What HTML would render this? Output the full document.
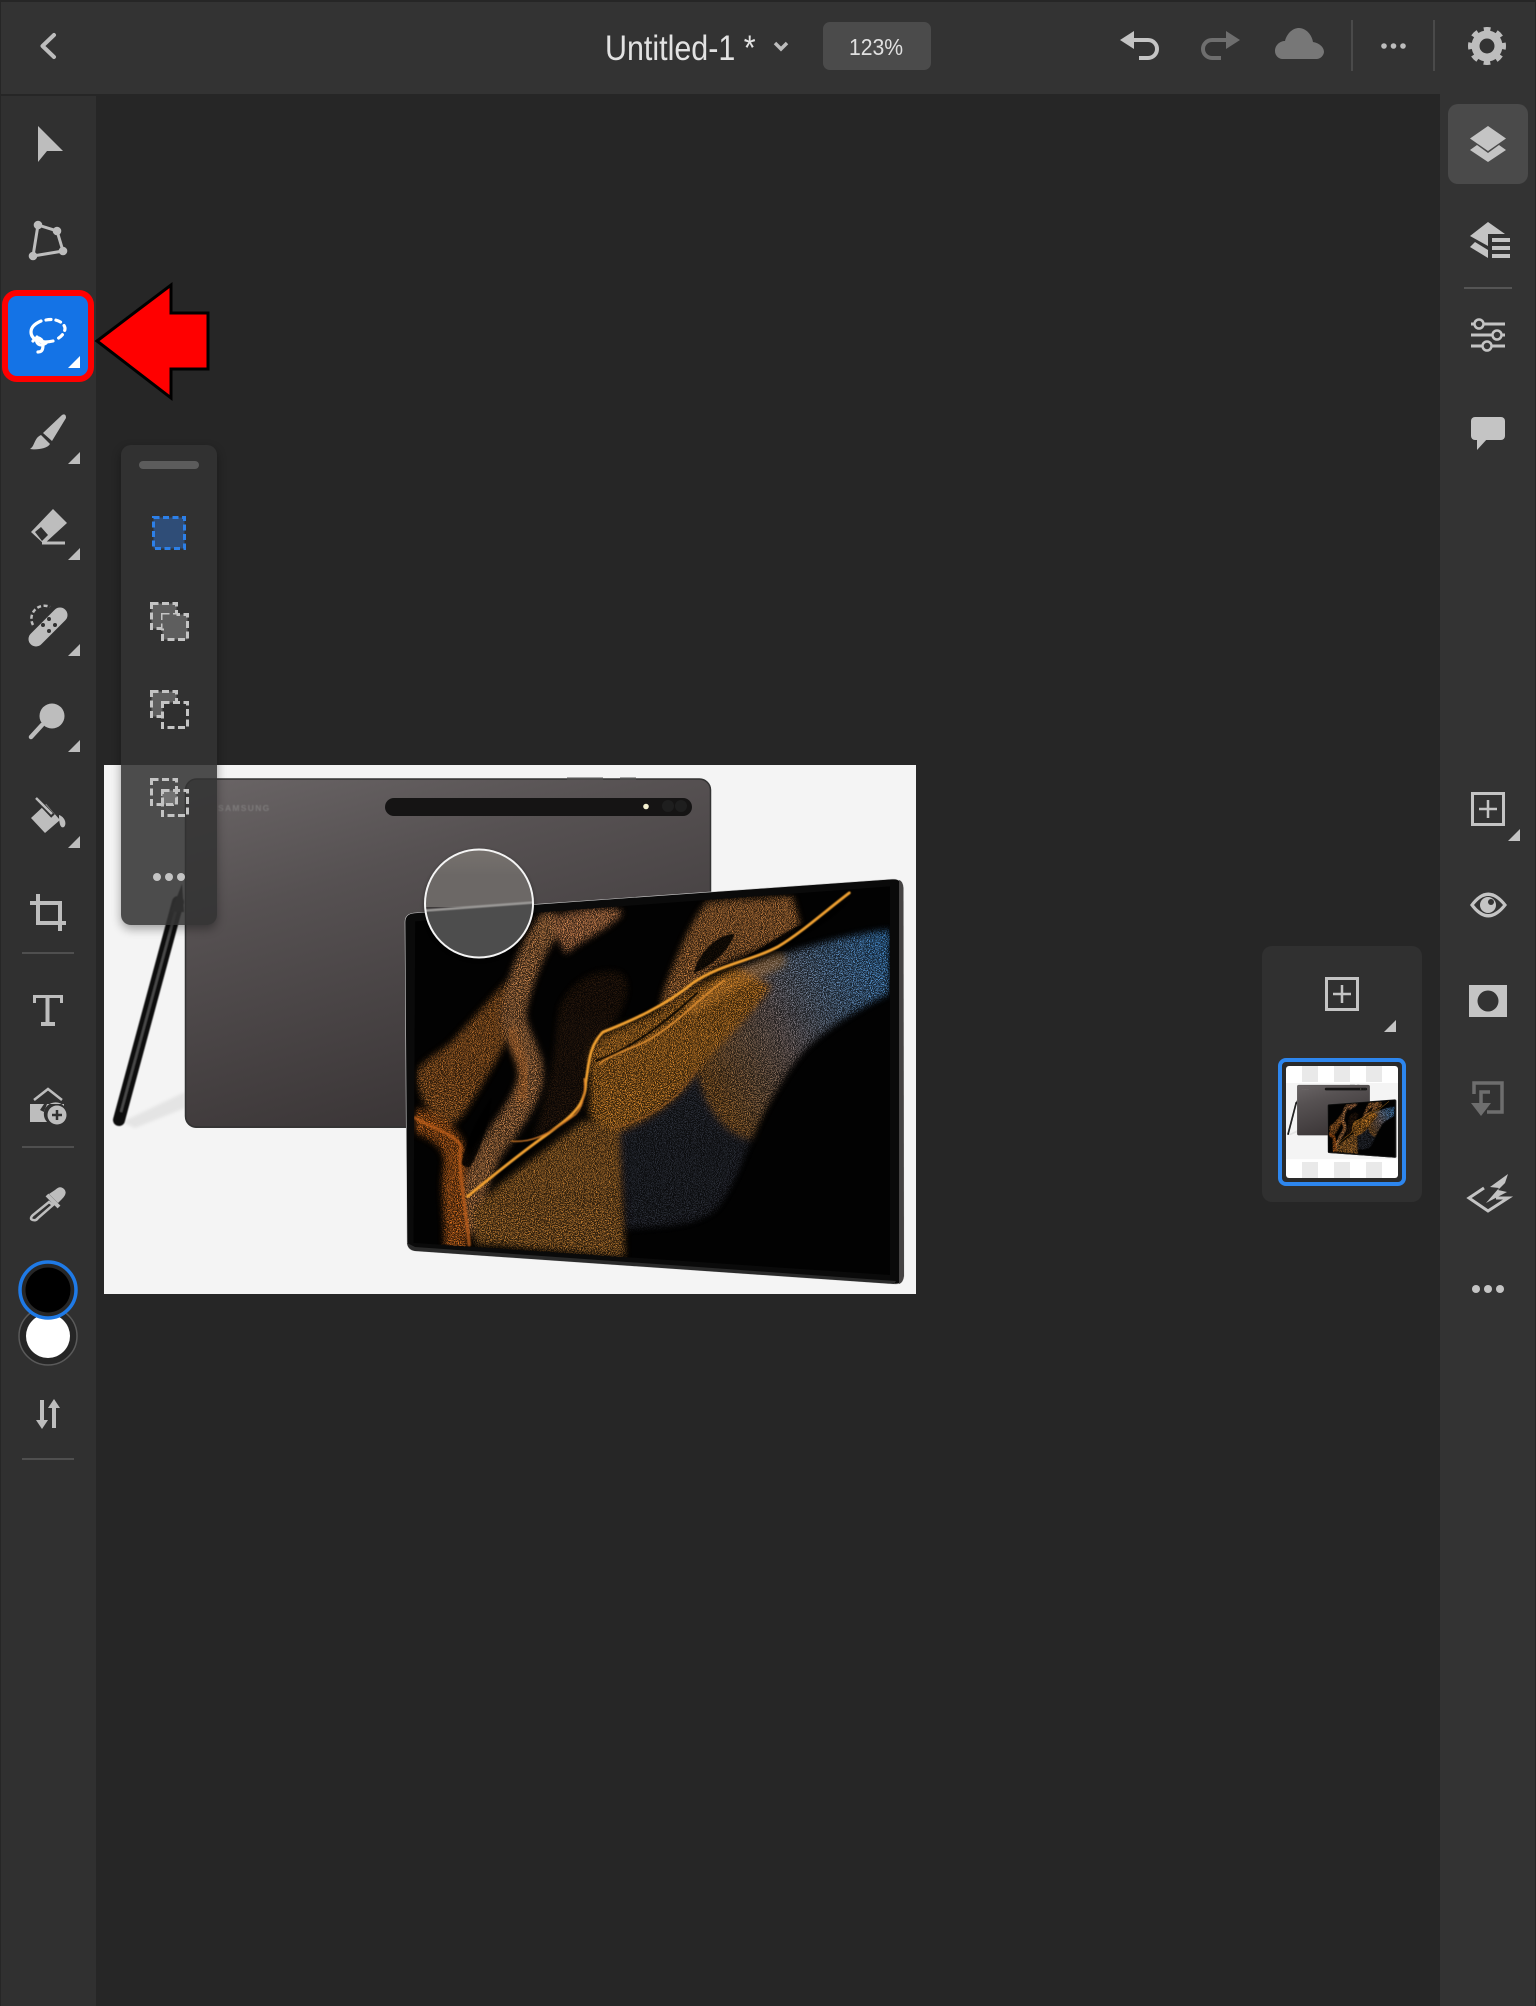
<!DOCTYPE html>
<html><head><meta charset="utf-8"><title>Untitled-1</title>
<style>html,body{margin:0;padding:0;background:#000;width:1536px;height:2006px;overflow:hidden}svg{display:block}text{font-family:"Liberation Sans",sans-serif}</style></head>
<body>
<svg xmlns="http://www.w3.org/2000/svg" width="1536" height="2006" viewBox="0 0 1536 2006">
<defs>
<filter id="st" x="0" y="0" width="1" height="1" color-interpolation-filters="sRGB">
<feTurbulence type="fractalNoise" baseFrequency=".36" numOctaves="3" seed="4" result="n"/>
<feColorMatrix in="n" type="matrix" values="0 0 0 0 0 0 0 0 0 0 0 0 0 0 0 8 0 0 0 -3.950" result="m"/>
<feGaussianBlur in="SourceGraphic" stdDeviation="9" result="s"/>
<feComposite in="s" in2="m" operator="in"/>
<feGaussianBlur stdDeviation="1"/>
</filter>
<filter id="bs" x="-10%" y="-10%" width="120%" height="120%"><feGaussianBlur stdDeviation="12"/></filter>
<filter id="bg" x="-20%" y="-20%" width="140%" height="140%"><feGaussianBlur stdDeviation="10"/></filter>
<filter id="b1" x="-10%" y="-10%" width="120%" height="120%"><feGaussianBlur stdDeviation="1.600"/></filter>
<filter id="bp" x="-20%" y="-5%" width="140%" height="110%"><feGaussianBlur stdDeviation=".6"/></filter>
<filter id="b3" x="-30%" y="-30%" width="160%" height="160%"><feGaussianBlur stdDeviation="5"/></filter>
<filter id="bt"><feGaussianBlur stdDeviation=".55"/></filter>
<linearGradient id="back" x1="0" y1="0" x2=".45" y2="1"><stop offset="0" stop-color="#6a6566"/><stop offset=".35" stop-color="#565152"/><stop offset="1" stop-color="#3a3536"/></linearGradient>
<linearGradient id="blue" gradientUnits="userSpaceOnUse" x1="900" y1="900" x2="1450" y2="570"><stop offset="0" stop-color="#a06a30"/><stop offset=".4" stop-color="#8a7a78"/><stop offset=".75" stop-color="#5f8ab8"/><stop offset="1" stop-color="#4a96de"/></linearGradient>
<linearGradient id="mag" x1="0" y1="0" x2="0" y2="1"><stop offset="0" stop-color="#78736f"/><stop offset=".5" stop-color="#6c6866"/></linearGradient>
<clipPath id="imgclip"><rect x="104" y="765" width="812" height="529"/></clipPath>
<clipPath id="magclip"><circle cx="479" cy="903.5" r="54"/></clipPath>
<clipPath id="noPop"><path clip-rule="evenodd" d="M0 0H1536V2006H0ZM131 445H207A10 10 0 0 1 217 455V915A10 10 0 0 1 207 925H131A10 10 0 0 1 121 915V455A10 10 0 0 1 131 445Z"/></clipPath>
<clipPath id="thumbclip"><rect x="1286" y="1066" width="112" height="112" rx="3"/></clipPath>
<clipPath id="scr"><path d="M45 480L1450 382L1450 1470L40 1380Z"/></clipPath>
<g id="art" stroke-linecap="round" stroke-linejoin="round">
<path fill="#b86e2c" d="M50 900C90 850 130 850 180 790C240 730 300 660 350 620C330 700 320 760 310 820C280 880 240 940 200 1000C170 1050 130 1060 110 1040C80 1000 50 960 50 900Z"/>
<path fill="none" stroke="#d08a50" stroke-width="72" d="M440 490C390 560 350 650 335 740C340 810 400 860 385 930C365 1000 300 1070 260 1130C230 1190 210 1260 200 1320"/>
<path fill="none" stroke="#d87020" stroke-width="66" d="M60 1040C110 1060 170 1090 165 1160C150 1240 170 1310 165 1385"/>
<path fill="#e09058" d="M440 470L530 450C580 440 640 440 660 455C620 500 540 530 490 570Z"/>
<path fill="#b87830" d="M215 1290C280 1220 420 1130 540 1040C590 1040 620 1050 650 1070L665 1420L270 1385L225 1385Z"/>
<path fill="#d8882c" d="M560 860C580 800 620 790 700 760C800 720 900 640 1000 610C1060 610 1090 620 1100 660C1050 740 950 820 880 900C820 990 720 1040 650 1070C600 1060 580 1040 560 1020C570 960 560 900 560 860Z"/>
<path fill="#c88040" d="M780 680C810 600 860 480 910 425L1160 408L1185 490C1100 560 1000 570 930 610C880 650 830 690 770 720Z"/>
<path fill="url(#blue)" d="M1000 610C1150 570 1300 520 1450 505L1448 680C1340 730 1220 800 1170 870C1110 950 1070 1020 1040 1090C960 1080 900 1000 880 900C950 820 1050 740 1100 660Z"/>
<path fill="#6a7088" opacity=".38" d="M880 900C900 1000 960 1080 1040 1090C1010 1160 980 1240 930 1290C850 1340 760 1330 670 1340L650 1070C740 1040 820 990 880 900Z"/>
<path fill="#a8652c" opacity=".22" d="M470 720C500 660 560 610 640 620C720 640 640 780 590 800C560 850 550 920 545 1000C500 1040 430 1080 390 1090C450 950 460 820 470 720Z"/>
</g>
<g id="photo">
<rect x="104" y="765" width="812" height="529" fill="#f4f4f4"/>
<path d="M122 1122L185 1092V1108L135 1128Z" fill="#e4e4e4" filter="url(#b1)"/>
<rect x="185" y="779" width="526" height="349" rx="11" fill="url(#back)"/>
<rect x="185.500" y="779" width="525" height="348" rx="11" fill="none" stroke="#333" stroke-width="1.500"/>
<rect x="567" y="777.500" width="36" height="2" fill="#555"/><rect x="620" y="777.500" width="16" height="2" fill="#555"/>
<rect x="385" y="798" width="307" height="18" rx="9" fill="#151414"/>
<circle cx="646" cy="806.500" r="2.800" fill="#f4f0d0"/>
<circle cx="668" cy="806" r="6" fill="#1e1e1e"/><circle cx="681" cy="806" r="6" fill="#1e1e1e"/>
<text x="218" y="811" font-size="8.500" font-weight="700" letter-spacing="1.300" fill="#7d7a7a" filter="url(#bt)">SAMSUNG</text>
<g filter="url(#bp)">
<path d="M178 902L119 1120" stroke="#111" stroke-width="12" stroke-linecap="round" fill="none"/>
<path d="M176 910L121 1112" stroke="#4a4a4a" stroke-width="2.500" fill="none"/>
<path d="M182 884L171 912H184Z" fill="#1a1a1a"/>
</g>
<path d="M414 913L893 879Q902 879 903 888L904 1276Q903 1285 894 1284L415 1251Q407 1250 407 1242L405 922Q405 914 414 913Z" fill="#0a0a0a" stroke="#cfcfcf" stroke-width=".6"/>
<path d="M899 880Q903 881 903.500 888L904 1276Q903 1283 899 1284Z" fill="#454343"/>
<path d="M407 1243Q408 1250 415 1251L894 1284L896 1281L415 1247Z" fill="#2a2a2a"/>
<g transform="translate(400,750) scale(.33784,.35714)">
<path d="M45 480L1450 382L1450 1470L40 1380Z" fill="#020202"/>
<g clip-path="url(#scr)">
<use href="#art" filter="url(#bs)" opacity=".26"/>
<use href="#art" filter="url(#st)"/>
<path fill="#040201" opacity=".85" d="M180 1160C200 1080 240 1020 270 975C260 1050 240 1120 205 1170Z" filter="url(#b1)"/>
<path fill="#030201" opacity=".85" d="M870 625C880 570 940 515 990 515C975 565 915 610 870 625Z" filter="url(#b1)"/>
<path fill="#030201" opacity=".85" d="M1000 590C1100 540 1170 490 1190 490L1330 420C1290 470 1200 520 1100 565Z" filter="url(#b1)"/>
<g fill="none" stroke-linecap="round">
<path stroke="#d88a30" stroke-width="46" opacity=".3" d="M1120 590C1000 640 950 660 870 720" filter="url(#bg)"/>
<path stroke="#c86c24" stroke-width="30" opacity=".3" d="M330 790C340 860 390 880 360 970" filter="url(#bg)"/>
</g>
<g fill="none" stroke-linecap="round" filter="url(#b1)">
<path stroke="#f0a030" stroke-width="8" d="M1330 400C1260 450 1190 510 1120 550C1040 590 950 600 870 650C780 720 680 760 600 790C560 830 560 870 550 930C550 1000 500 1030 430 1080C370 1120 290 1180 200 1250"/>
<path stroke="#dc8c30" stroke-width="5" d="M960 645C890 690 820 770 720 820C660 845 610 860 590 880"/>
<path stroke="#c06018" stroke-width="10" opacity=".7" d="M45 1030C100 1060 170 1080 180 1110C170 1180 195 1280 205 1385"/>
<path stroke="#c87426" stroke-width="4" d="M330 1095C380 1100 430 1085 520 1020C540 1000 550 970 545 920"/>
<path stroke="#a86428" stroke-width="3" opacity=".7" d="M880 890C820 990 720 1040 620 1060"/>
<path stroke="#060302" stroke-width="5" d="M580 870C680 840 790 760 880 680"/>
</g>
</g>
</g>
</g>
</defs>

<!-- base -->
<rect x="0" y="0" width="1536" height="2006" fill="#262626"/>
<rect x="1" y="96" width="95" height="1910" fill="#303030"/>
<rect x="1440" y="94" width="95" height="1912" fill="#333"/>
<rect x="1" y="2" width="1534" height="92" fill="#333"/>

<!-- photo -->
<g clip-path="url(#imgclip)"><use href="#photo"/></g>

<!-- magnifier -->
<circle cx="479" cy="905" r="56" fill="#000" opacity=".25" filter="url(#b1)"/>
<g clip-path="url(#magclip)">
<rect x="420" y="845" width="120" height="62" fill="url(#mag)"/>
<path d="M420 912L540 902V965H420Z" fill="#4d4d4d"/>
<path d="M420 911L540 902" stroke="#9a9896" stroke-width="2.500" fill="none" filter="url(#bt)"/>
</g>
<circle cx="479" cy="903.500" r="54" fill="none" stroke="#f4f4f4" stroke-width="2"/>

<!-- floating popup -->
<g clip-path="url(#noPop)"><rect x="121" y="449" width="96" height="480" rx="10" fill="#000" opacity=".35" filter="url(#b3)"/></g>
<rect x="121" y="445" width="96" height="480" rx="10" fill="#333" fill-opacity=".87"/>
<rect x="139" y="461" width="60" height="8" rx="4" fill="#5c5c5c"/>
<rect x="153.500" y="517.500" width="31" height="31" fill="#2f4d77" stroke="#2d80e8" stroke-width="3" stroke-dasharray="6 3.500"/>
<g fill="none" stroke="#c4c4c4" stroke-width="3" stroke-dasharray="7 3.500">
<rect x="151.500" y="603.500" width="25" height="25" fill="#5e5e5e"/>
<rect x="162.500" y="614.500" width="25" height="25" fill="#5e5e5e"/>
<path d="M162.500 614.500h14v14h-14z" fill="#5e5e5e" stroke="none"/>
<rect x="151.500" y="691.500" width="25" height="25" fill="#5e5e5e"/>
<rect x="162.500" y="702.500" width="25" height="25" fill="#2f2f2f"/>
<rect x="151.500" y="779.500" width="25" height="25"/>
<rect x="162.500" y="790.500" width="25" height="25"/>
<rect x="162.500" y="790.500" width="14" height="14" fill="#727272"/>
</g>
<g fill="#c4c4c4"><circle cx="157" cy="877" r="4"/><circle cx="169" cy="877" r="4"/><circle cx="181" cy="877" r="4"/></g>

<!-- top bar -->
<path d="M54 35L42.500 46L54 57" fill="none" stroke="#bdbdbd" stroke-width="4" stroke-linecap="round" stroke-linejoin="round"/>
<text transform="translate(605,60) scale(.87,1)" font-size="35" fill="#e2e2e2">Untitled-1 *</text>
<path d="M775 43L781 49L787 43" fill="none" stroke="#bdbdbd" stroke-width="3.500"/>
<rect x="823" y="22" width="108" height="48" rx="7" fill="#4b4b4b"/>
<text transform="translate(876,55) scale(.92,1)" font-size="23" text-anchor="middle" fill="#e0e0e0">123%</text>
<path d="M1126 40H1148A9 9 0 0 1 1148 58H1139" fill="none" stroke="#c4c4c4" stroke-width="4"/>
<path d="M1134 31L1120 40L1134 49Z" fill="#c4c4c4"/>
<path d="M1234 40H1212A9 9 0 0 0 1212 58H1221" fill="none" stroke="#6e6e6e" stroke-width="4"/>
<path d="M1226 31L1240 40L1226 49Z" fill="#6e6e6e"/>
<path d="M1282 59A8 8 0 0 1 1275 51C1275 45 1280 41 1285 41C1287 33 1293 28 1299 28C1306 28 1312 35 1313 42C1319 43 1324 47 1324 52A8 8 0 0 1 1317 59Z" fill="#777"/>
<rect x="1351" y="20" width="2" height="51" fill="#4a4a4a"/>
<rect x="1433" y="20" width="2" height="51" fill="#4a4a4a"/>
<g fill="#bdbdbd"><circle cx="1384" cy="46" r="2.800"/><circle cx="1393.500" cy="46" r="2.800"/><circle cx="1403" cy="46" r="2.800"/></g>
<circle cx="1487" cy="46" r="16.500" fill="none" stroke="#bdbdbd" stroke-width="5" stroke-dasharray="6.500 6.460" stroke-dashoffset="3.250"/>
<circle cx="1487" cy="46" r="11.500" fill="none" stroke="#bdbdbd" stroke-width="8"/>

<!-- left toolbar -->
<g fill="#bdbdbd" stroke="none">
<path d="M38 126L63 151H47L38 162Z"/>
<path d="M38 225L57 231L63 251L33 256Z" fill="none" stroke="#bdbdbd" stroke-width="3"/>
<circle cx="38" cy="225" r="4.300"/><circle cx="57" cy="231" r="4.300"/><circle cx="63" cy="251" r="4.300"/><circle cx="33" cy="256" r="4.300"/>
<!-- brush -->
<path d="M62 415Q66 413 66 418L52 441L43 433Z"/>
<path d="M41 435L50 444C47 449 36 450 30 449C35 446 34 438 41 435Z"/>
<path d="M80 452L68 464H80Z"/>
<!-- eraser -->
<path d="M53 509L67 523L44 544L31 532Z"/>
<path d="M35 532L41 527L48 535L42 541Z" fill="#303030"/>
<rect x="42" y="541.500" width="23" height="3"/>
<path d="M80 548L68 560H80Z"/>
<!-- bandage -->
<path d="M36 639L60 615" stroke="#bdbdbd" stroke-width="15" stroke-linecap="round"/>
<g fill="#303030"><circle cx="49" cy="619" r="2"/><circle cx="55" cy="625" r="2"/><circle cx="43" cy="625" r="2"/><circle cx="49" cy="631" r="2"/></g>
<path d="M33 625A13 13 0 0 1 50 607" fill="none" stroke="#bdbdbd" stroke-width="2.500" stroke-dasharray="4 2.500"/>
<path d="M80 644L68 656H80Z"/>
<!-- dodge -->
<circle cx="52" cy="716" r="12.500"/>
<path d="M42 725L31 737" stroke="#bdbdbd" stroke-width="4.500" stroke-linecap="round"/>
<path d="M80 740L68 752H80Z"/>
<!-- bucket -->
<path d="M31 818L45 833L60 820L46 804Z"/>
<path d="M36 798L53 816" stroke="#303030" stroke-width="5"/>
<path d="M36 798L52 814" stroke="#bdbdbd" stroke-width="2.500"/>
<path d="M59 815C65 817 67 824 64 827C60 829 59 822 59 815Z"/>
<path d="M80 836L68 848H80Z"/>
<!-- crop -->
<path d="M30 903H60V931M38 894V923H66" fill="none" stroke="#bdbdbd" stroke-width="4"/>
<rect x="22" y="952" width="52" height="2" fill="#4f4f4f"/>
<!-- type -->
<path d="M33 995H63V1003H60V998H49.500V1022H55V1026H41V1022H45.500V998H36V1003H33Z"/>
<!-- add image -->
<path d="M34 1100L48 1089L62 1100" fill="none" stroke="#bdbdbd" stroke-width="2.500"/>
<path d="M30 1104H44L40 1110L44 1112L47 1104H64V1106A11 11 0 0 0 47 1122H30Z"/>
<circle cx="57" cy="1115" r="9.500"/>
<path d="M57 1110V1120M52 1115H62" stroke="#303030" stroke-width="2.500"/>
<rect x="22" y="1146" width="52" height="2" fill="#4f4f4f"/>
<!-- eyedropper -->
<path d="M49 1194L58 1203L62 1199Q68 1193 64 1189Q60 1185 55 1190Z"/>
<path d="M47 1195L59 1207" stroke="#bdbdbd" stroke-width="4"/>
<path d="M49 1202L33 1215Q29 1219 33 1220Q36 1221 38 1218L53 1205Z" fill="none" stroke="#bdbdbd" stroke-width="2.500"/>
<!-- swatches -->
<circle cx="48" cy="1336" r="29" fill="#262626" stroke="#5a5a5a" stroke-width="1.500"/>
<circle cx="48" cy="1336" r="22" fill="#fff"/>
<circle cx="48" cy="1290" r="28" fill="#262626" stroke="#1f7ae6" stroke-width="3.500"/>
<circle cx="48" cy="1290" r="22.500" fill="#000"/>
<!-- swap -->
<rect x="40" y="1400" width="4" height="22"/><path d="M36 1420H48L42 1429Z"/>
<rect x="52" y="1406" width="4" height="22"/><path d="M48 1408H60L54 1399Z"/>
<rect x="22" y="1458" width="52" height="2" fill="#4f4f4f"/>
</g>

<!-- active tool -->
<rect x="5" y="293" width="86" height="86" rx="12" fill="#1473e6" stroke="#f00" stroke-width="6"/>
<g fill="none" stroke="#fff" stroke-width="3.200" stroke-linecap="round">
<path d="M46 320C55 318 64 322 65 328C65 333 61 337 57 339" stroke-dasharray="5 5"/>
<path d="M41 321C34 324 31 328 31 332C31 339 40 344 53 341"/>
<path d="M33 341C38 335 43 339 43 345C43 351 41 352 38 352M37 337C35 344 40 347 46 343"/>
</g>
<path d="M80 356L68 368H80Z" fill="#fff"/>

<!-- red arrow -->
<path d="M97 341L171 285V313H208V369H171V398Z" fill="#f00" stroke="#000" stroke-width="3"/>

<!-- right panel -->
<rect x="1448" y="104" width="80" height="80" rx="10" fill="#4a4a4a"/>
<g fill="#c4c4c4">
<path d="M1488 126L1506 138.500L1488 151L1470 138.500Z"/>
<path d="M1470 150L1477 145L1488 153L1499 145L1506 150L1488 162Z"/>
<path d="M1488 222L1505 234H1488V246L1470 236Z"/>
<path d="M1470 247L1475 242L1488 250V258Z"/>
<rect x="1492" y="238" width="18" height="4"/><rect x="1492" y="246" width="18" height="4"/><rect x="1492" y="254" width="18" height="4"/>
<rect x="1464" y="287" width="48" height="2" fill="#555"/>
<rect x="1471" y="322.500" width="34" height="3"/><rect x="1471" y="333.500" width="34" height="3"/><rect x="1471" y="344.500" width="34" height="3"/>
<circle cx="1479" cy="324" r="4.500" fill="#333" stroke="#c4c4c4" stroke-width="2.500"/>
<circle cx="1497" cy="335" r="4.500" fill="#333" stroke="#c4c4c4" stroke-width="2.500"/>
<circle cx="1487" cy="346" r="4.500" fill="#333" stroke="#c4c4c4" stroke-width="2.500"/>
<rect x="1471" y="417" width="34" height="23" rx="4"/>
<path d="M1477 438V450L1488 438Z"/>
<!-- add layer -->
<rect x="1472.500" y="793.500" width="31" height="31" fill="none" stroke="#c4c4c4" stroke-width="3"/>
<path d="M1488 800V818M1479 809H1497" stroke="#c4c4c4" stroke-width="2.500"/>
<path d="M1520 829L1508 841H1520Z"/>
<!-- eye -->
<path d="M1470 905Q1488 880 1507 905Q1488 930 1470 905Z"/>
<path d="M1474 905Q1488 887 1503 905Q1488 923 1474 905Z" fill="#333"/>
<circle cx="1488" cy="905" r="8"/>
<circle cx="1491" cy="902" r="3" fill="#333"/>
<!-- mask -->
<rect x="1469" y="985" width="38" height="32"/>
<circle cx="1488" cy="1001" r="10.500" fill="#333"/>
</g>
<g fill="none" stroke="#6e6e6e" stroke-width="3.500">
<path d="M1474 1094V1083H1502V1112H1487"/>
<path d="M1490 1092H1481V1104"/>
</g>
<path d="M1471 1103H1491L1481 1116Z" fill="#6e6e6e"/>
<g fill="none" stroke="#c4c4c4" stroke-width="3">
<path d="M1484 1188L1469 1198L1488 1211L1508 1198H1496"/>
</g>
<path d="M1508 1174L1490 1187L1499 1188L1486 1203L1507 1192L1498 1190L1505 1183Z" fill="#c4c4c4"/>
<g fill="#c4c4c4"><circle cx="1476" cy="1289" r="4"/><circle cx="1488" cy="1289" r="4"/><circle cx="1500" cy="1289" r="4"/></g>

<!-- layers panel -->
<rect x="1262" y="946" width="160" height="256" rx="10" fill="#303030"/>
<rect x="1326.500" y="978.500" width="31" height="31" fill="none" stroke="#c4c4c4" stroke-width="3"/>
<path d="M1342 985V1003M1333 994H1351" stroke="#c4c4c4" stroke-width="2.500"/>
<path d="M1396 1020L1384 1032H1396Z" fill="#c4c4c4"/>
<rect x="1280" y="1060" width="124" height="124" rx="6" fill="#2a2a2a" stroke="#2d86ee" stroke-width="4"/>
<g clip-path="url(#thumbclip)">
<rect x="1286" y="1066" width="112" height="112" fill="#fff"/>
<g fill="#e9e9e9">
<rect x="1302" y="1066" width="16" height="16"/><rect x="1334" y="1066" width="16" height="16"/><rect x="1366" y="1066" width="16" height="16"/>
<rect x="1302" y="1162" width="16" height="16"/><rect x="1334" y="1162" width="16" height="16"/><rect x="1366" y="1162" width="16" height="16"/>
</g>
<g transform="translate(1286,1083) scale(.138,.144) translate(-104,-765)"><use href="#photo"/></g>
</g>
</svg>
</body></html>
